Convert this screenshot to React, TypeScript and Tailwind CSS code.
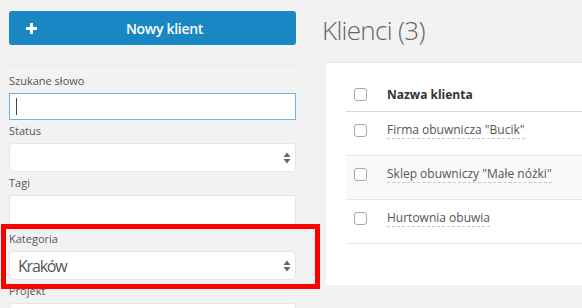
import React from "react";

function Arrows() {
  return (
    <svg width="8" height="12" viewBox="0 0 8 12" className="absolute right-[4px] top-1/2 -translate-y-1/2">
      <path d="M4 0.5 L7.5 5 L0.5 5 Z" fill="#666" />
      <path d="M4 11.5 L7.5 7 L0.5 7 Z" fill="#666" />
    </svg>
  );
}

function Label({ children }: { children: React.ReactNode }) {
  return <div className="text-[11px] leading-[16px] text-[#555]">{children}</div>;
}

function Checkbox() {
  return <div className="w-[13px] h-[13px] rounded-[3px] border border-[#a8a8a8] bg-white shrink-0" />;
}

function Row({ name, alt }: { name: string; alt?: boolean }) {
  return (
    <div className={`h-[44px] flex items-center pb-[6px] border-b border-[#e6e6e6] ${alt ? "bg-[#f9f9f9]" : "bg-white"}`}>
      <div className="w-[41px] pl-[8px] flex items-center">
        <Checkbox />
      </div>
      <span className="text-[12px] leading-[16px] text-[#555] border-b border-dashed border-[#c8c8c8]">{name}</span>
    </div>
  );
}

export default function App() {
  return (
    <div className="relative w-[582px] h-[308px] overflow-hidden bg-[#f2f2f2] flex items-start font-['Open_Sans',sans-serif]">
      <div className="w-[287px] ml-[9px] pt-[11px] shrink-0">
        <div className="h-[34px] rounded-[3px] bg-[#1987c4] flex items-center text-white relative">
          <svg width="11" height="11" viewBox="0 0 11 11" className="absolute left-[17px] top-[12px]">
            <rect x="4" y="0" width="3" height="11" fill="#fff" />
            <rect x="0" y="4" width="11" height="3" fill="#fff" />
          </svg>
          <span className="w-full text-center text-[14px] font-semibold tracking-[-0.3px] pl-[24px]">Nowy klient</span>
        </div>
        <div className="mt-[20px] h-px bg-[#e8e8e8]" />
        <div className="mt-[7px]"><Label>Szukane słowo</Label></div>
        <div className="mt-[4px] h-[27px] bg-white border border-[#6ab6de] relative">
          <div className="absolute left-[6px] top-[4px] w-px h-[17px] bg-[#444]" />
        </div>
        <div className="mt-[3px]"><Label>Status</Label></div>
        <div className="mt-[4px] h-[29px] bg-white border border-[#e6e6e6] rounded-[4px] relative">
          <Arrows />
        </div>
        <div className="mt-[3px]"><Label>Tagi</Label></div>
        <div className="mt-[4px] h-[33px] bg-white border border-[#e6e6e6] rounded-[2px]" />
        <div className="mt-[3px]"><Label>Kategoria</Label></div>
        <div className="mt-[4px] h-[29px] bg-white border border-[#e6e6e6] rounded-[4px] relative flex items-center pl-[8px]">
          <span className="text-[16px] tracking-[-1.2px] text-[#555]">Kraków</span>
          <Arrows />
        </div>
        <div className="mt-[3px]"><Label>Projekt</Label></div>
        <div className="mt-[4px] h-[29px] bg-white border border-[#e6e6e6] rounded-[4px]" />
      </div>

      <div className="ml-[26px] flex-1 min-w-0">
        <div className="pt-[12px] h-[50px] text-[26px] leading-[36px] font-light tracking-[-0.7px] text-[#666] whitespace-nowrap">Klienci (3)</div>
        <div className="ml-[4px] mt-[12px] h-[223px] w-[300px] bg-white border-t border-[#e8e8e8] pl-[20px] pt-[15px]">
          <div className="h-[34px] flex items-center border-b border-[#d9d9d9]">
            <div className="w-[41px] pl-[8px] flex items-center">
              <Checkbox />
            </div>
            <span className="text-[12px] font-bold text-[#333]">Nazwa klienta</span>
          </div>
          <Row name={'Firma obuwnicza "Bucik"'} />
          <Row name={'Sklep obuwniczy "Małe nóżki"'} alt />
          <Row name="Hurtownia obuwia" />
        </div>
      </div>

      <div className="absolute left-[1px] top-[224px] w-[319px] h-[65px] border-[5px] border-[#ff0000] pointer-events-none" />
    </div>
  );
}
